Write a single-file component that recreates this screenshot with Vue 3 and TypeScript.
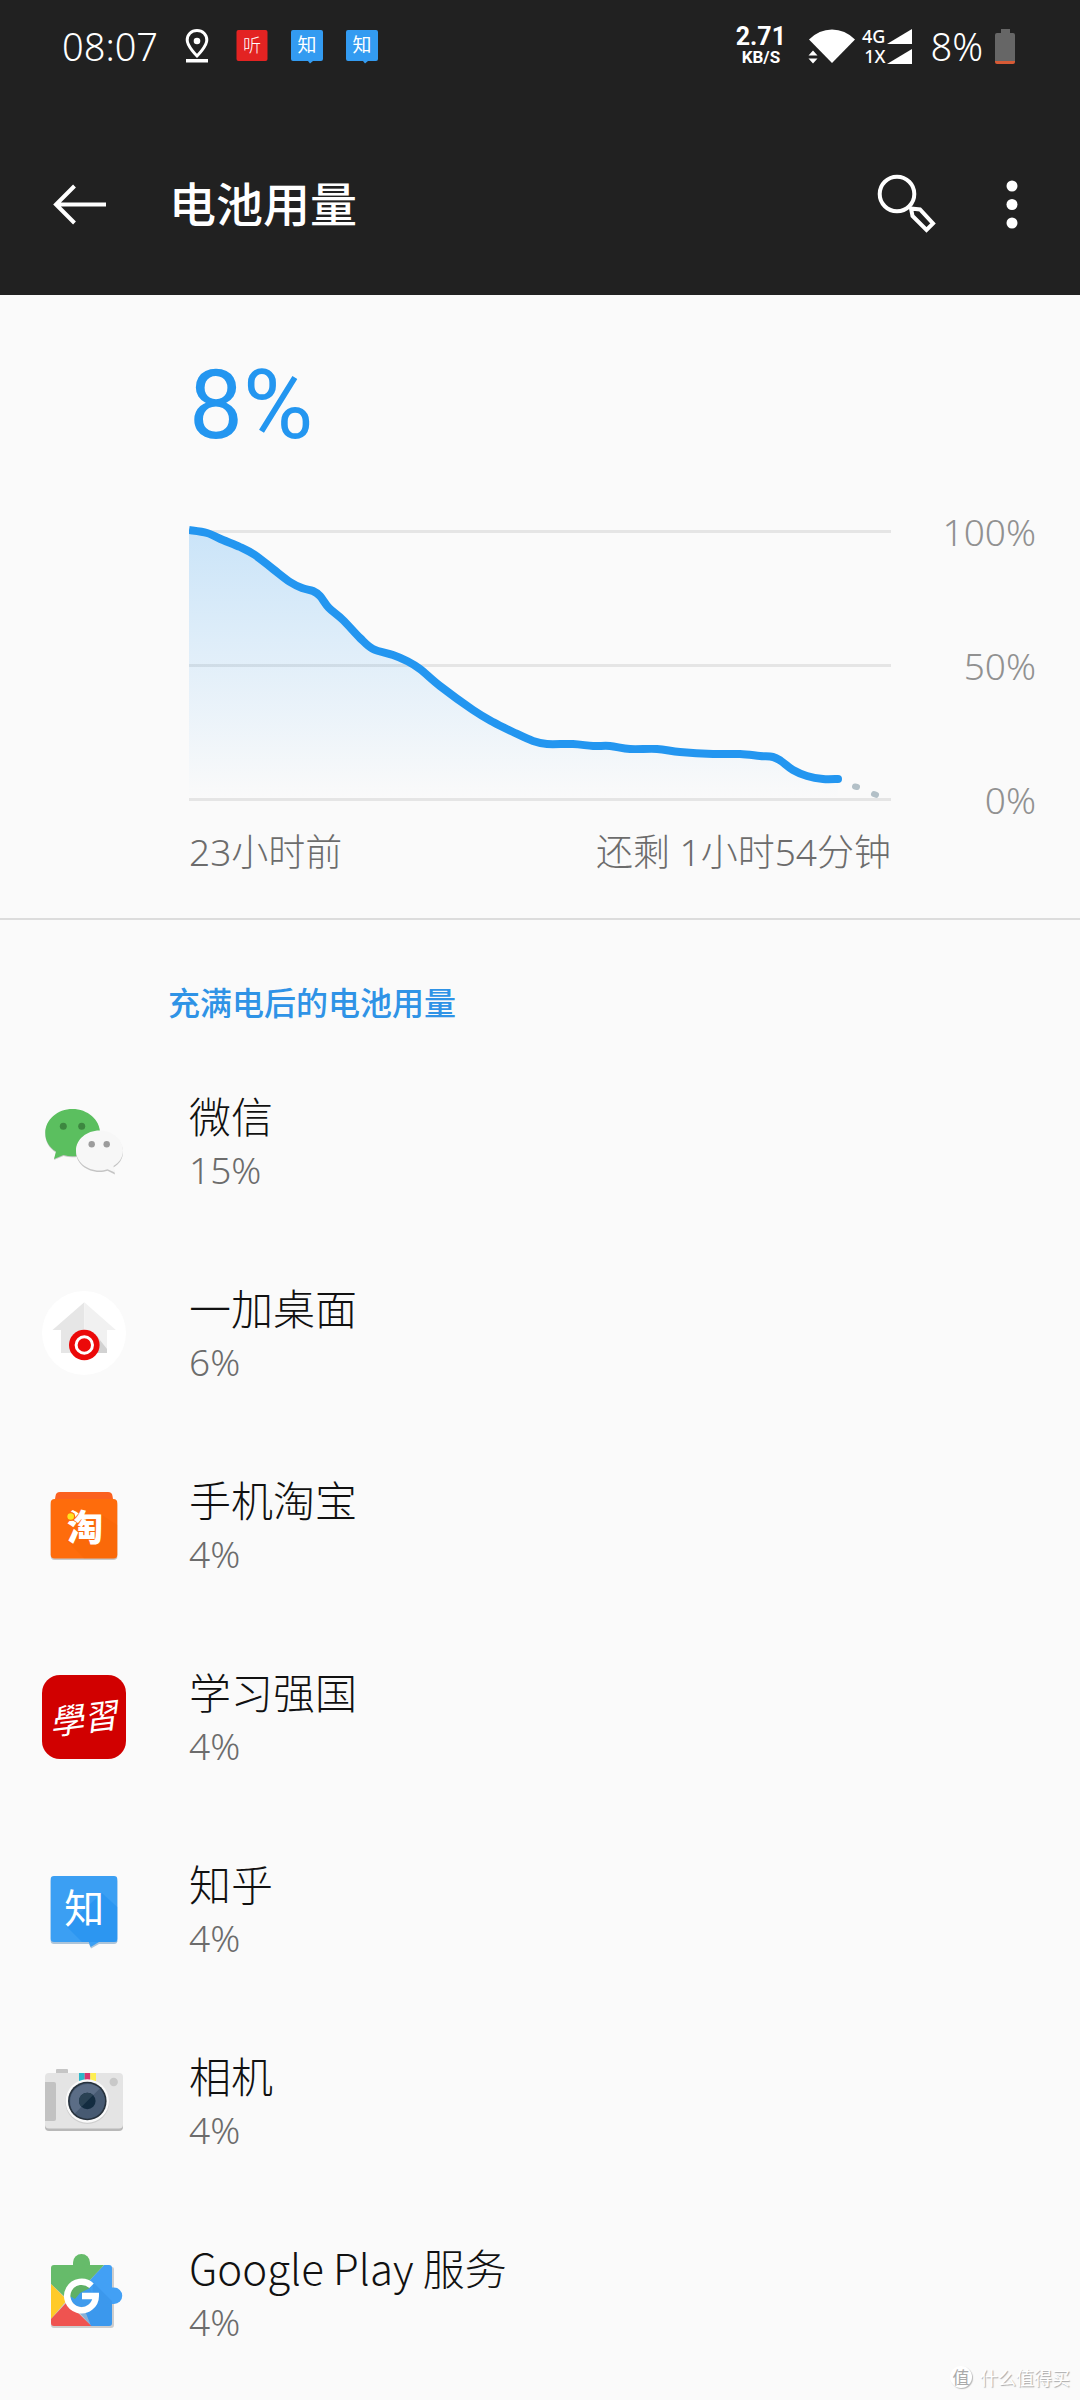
<script setup lang="ts">
interface AppUsage {
  id: string
  name: string
  percent: number
}

const level = 8

const apps: AppUsage[] = [
  { id: 'wechat', name: '微信', percent: 15 },
  { id: 'launcher', name: '一加桌面', percent: 6 },
  { id: 'taobao', name: '手机淘宝', percent: 4 },
  { id: 'xuexi', name: '学习强国', percent: 4 },
  { id: 'zhihu', name: '知乎', percent: 4 },
  { id: 'camera', name: '相机', percent: 4 },
  { id: 'play', name: 'Google Play 服务', percent: 4 },
]

// Battery history samples in plot coordinates (702 x 290, grid lines at 10, 144 and 278).
const history: [number, number][] = [
  [0, 9], [18, 12], [34, 19], [51, 26], [66, 34], [84, 48], [101, 61], [113, 67], [124, 70],
  [131, 75], [140, 87], [154, 99], [171, 117], [184, 128], [204, 134], [218, 140], [231, 148],
  [251, 165], [284, 189], [304, 201], [324, 211], [344, 220], [358, 223], [384, 223], [404, 225],
  [421, 225], [441, 228], [468, 228], [491, 231], [524, 233], [551, 233], [571, 235], [584, 236],
  [592, 240], [604, 249], [618, 255], [634, 258], [649, 258],
]

// Catmull-Rom smoothing through the samples.
function smooth(points: [number, number][]): string {
  let d = `M${points[0][0]} ${points[0][1]}`
  for (let i = 0; i < points.length - 1; i++) {
    const a = points[Math.max(i - 1, 0)]
    const b = points[i]
    const c = points[i + 1]
    const e = points[Math.min(i + 2, points.length - 1)]
    d += `C${b[0] + (c[0] - a[0]) / 6} ${b[1] + (c[1] - a[1]) / 6} ${c[0] - (e[0] - b[0]) / 6} ${c[1] - (e[1] - b[1]) / 6} ${c[0]} ${c[1]}`
  }
  return d
}

const linePath = smooth(history)
const areaPath = `${linePath}V278H0Z`
</script>

<template>
  <div class="screen">
    <header class="top">
      <div class="status">
        <div class="status-side">
          <span class="clock">08:07</span>
          <svg class="badge" viewBox="0 0 32 36">
            <path d="M16 2.500c-5.800 0-9.800 4.300-9.800 9.600C6.200 18.500 16 28 16 28s9.800-9.500 9.800-15.900c0-5.300-4-9.600-9.800-9.600z" fill="none" stroke="#fff" stroke-width="3" />
            <circle cx="16" cy="13" r="3.300" fill="#fff" />
            <rect x="5" y="31" width="22" height="3.500" fill="#fff" />
          </svg>
          <svg class="badge" viewBox="0 0 32 36">
            <rect x="0.500" y="2" width="31" height="31" rx="2" fill="#e32322" />
            <text x="16" y="24" class="glyph thin" font-size="18">听</text>
          </svg>
          <svg v-for="n in 2" :key="n" class="badge" viewBox="0 0 32 36">
            <path d="M2 2h28q2 0 2 2v27q0 2-2 2h-8l-3 2.500-2-2.500H2q-2 0-2-2V4q0-2 2-2z" fill="#339bf1" />
            <text x="16" y="24" class="glyph" font-size="19">知</text>
          </svg>
        </div>
        <div class="status-side">
          <div class="speed"><span class="speed-value">2.71</span><span class="speed-unit">KB/S</span></div>
          <svg class="wifi" viewBox="0 0 48 36">
            <path d="M1 11.500Q11 1.500 24 1.500t23 10L24 35z" fill="#fff" />
            <path d="M0 22.500h9.500v13H0z" fill="#212121" />
            <path d="M0.500 27.500 5 22.500l4.500 5zM0.500 30.500l4.500 5 4.500-5z" fill="#fff" />
          </svg>
          <div class="sims">
            <span class="sim">4G<svg viewBox="0 0 25 15"><path d="M0 15 25 0v15z" fill="#fff" /></svg></span>
            <span class="sim">1X<svg viewBox="0 0 25 15"><path d="M0 15 25 0v15z" fill="#fff" /></svg></span>
          </div>
          <span class="charge">{{ level }}%</span>
          <svg class="battery" viewBox="0 0 20 35">
            <path d="M6 0h9v4h3q2 0 2 2v26H0V6q0-2 2-2h4z" fill="#666" />
            <path d="M0 32h20v1q0 2-2 2H2q-2 0-2-2z" fill="#d75a35" />
          </svg>
        </div>
      </div>
      <div class="appbar">
        <button class="icon-btn" type="button" aria-label="返回">
          <svg viewBox="0 0 60 60"><path d="M24.500 12 6 30.500 24.500 49M6.500 30.500H56" fill="none" stroke="#fff" stroke-width="4" /></svg>
        </button>
        <h1>电池用量</h1>
        <button class="icon-btn" type="button" aria-label="搜索">
          <svg viewBox="0 0 60 60">
            <circle cx="20" cy="20" r="17.300" fill="none" stroke="#fff" stroke-width="4" />
            <path d="M34 34.500 43 35.500 56 49.500 49.500 56 35.500 42z" fill="none" stroke="#fff" stroke-width="4" />
          </svg>
        </button>
        <button class="icon-btn" type="button" aria-label="更多选项">
          <svg viewBox="0 0 60 60" fill="#fff"><circle cx="30" cy="12" r="5.500" /><circle cx="30" cy="30.500" r="5.500" /><circle cx="30" cy="49" r="5.500" /></svg>
        </button>
      </div>
    </header>

    <main>
      <section class="summary">
        <p class="level">{{ level }}%</p>
        <div class="chart">
          <svg class="plot" viewBox="0 0 702 290" preserveAspectRatio="none">
            <defs>
              <linearGradient id="fade" x1="0" y1="0" x2="0" y2="1">
                <stop offset="0" stop-color="#2196f3" stop-opacity="0.220" />
                <stop offset="1" stop-color="#2196f3" stop-opacity="0" />
              </linearGradient>
            </defs>
            <path d="M0 10.500H702M0 144.500H702M0 278.500H702" stroke="#e5e5e5" stroke-width="3" />
            <path :d="areaPath" fill="url(#fade)" />
            <path :d="linePath" fill="none" stroke="#2396f0" stroke-width="8" />
            <circle cx="649" cy="258" r="4" fill="#2396f0" />
            <path d="M666 265.500l2 0.500M685 273l2 0.800" stroke="#b3c0c7" stroke-width="6" stroke-linecap="round" />
          </svg>
          <div class="scale"><span>100%</span><span>50%</span><span>0%</span></div>
          <div class="span"><span>23小时前</span><span>还剩 1小时54分钟</span></div>
        </div>
      </section>

      <section class="usage">
        <h2>充满电后的电池用量</h2>
        <ul>
          <li v-for="app in apps" :key="app.id">
            <button class="row" type="button">
              <svg class="app-icon" viewBox="0 0 84 84">
                <g v-if="app.id === 'wechat'">
                  <path d="M30.500 11C15.500 11 3.300 21.500 3.300 35c0 8 4 14.500 10.700 18.500L12 61l9.500-4c3 .8 6 1.200 9 1.200 15 0 27.500-10.500 27.500-23.500S45.500 11 30.500 11z" fill="#000" opacity="0.200" />
                  <path d="M30.500 10C15.500 10 3.300 20.500 3.300 34c0 8 4 14.500 10.700 18.500L12 60l9.500-4c3 .8 6 1.200 9 1.200 15 0 27.500-10.500 27.500-23.500S45.500 10 30.500 10z" fill="#5bbf5f" />
                  <circle cx="21.300" cy="27.300" r="3.500" fill="#3d8740" /><circle cx="39.700" cy="27.300" r="3.500" fill="#3d8740" />
                  <path d="M57.500 33C44.500 33 34 42 34 53s10.500 20 23.500 20c3 0 5.500-.4 8-1.200l7.500 3.700-1.500-7C77.500 65 81 59.500 81 53c0-11-10.500-20-23.500-20z" fill="#c4c4c4" />
                  <path d="M57.500 31.500C44.500 31.500 34 40.500 34 51.500s10.500 20 23.500 20c3 0 5.500-.4 8-1.200l7.500 3.200-1.500-6.500C77.500 63.500 81 58 81 51.500c0-11-10.500-20-23.500-20z" fill="#f7f7f7" />
                  <circle cx="49.700" cy="45.300" r="3.200" fill="#9c9c9c" /><circle cx="64.700" cy="45.300" r="3.200" fill="#9c9c9c" />
                </g>
                <g v-else-if="app.id === 'launcher'">
                  <circle cx="42" cy="42" r="42" fill="#fff" />
                  <path d="M42.300 11.300V62H19V39h-8.500z" fill="#e6e6e6" />
                  <path d="M42.300 11.300V62H65V39h8.800z" fill="#f1f1f1" />
                  <path d="M54 44 65 58v4H50z" fill="#d2d2d2" />
                  <circle cx="42.300" cy="54" r="15.300" fill="#eb0909" />
                  <circle cx="42.300" cy="54" r="8.200" fill="none" stroke="#fff" stroke-width="3" />
                </g>
                <g v-else-if="app.id === 'taobao'">
                  <path d="M18 9h48q4 0 4.500 4l1 6H12.500l1-6q.5-4 4.500-4z" fill="#fb6120" />
                  <rect x="8.700" y="18" width="66.600" height="59" rx="4" fill="#000" opacity="0.200" />
                  <rect x="8.700" y="16" width="66.600" height="59.500" rx="4" fill="#fe6c0c" />
                  <path d="M24 57 42 75.500h33.300V42L60 32z" fill="#e85d00" opacity="0.180" />
                  <text x="43" y="58" class="glyph heavy" font-size="36">淘</text>
                  <circle cx="28.700" cy="33.500" r="4.500" fill="#fe6c0c" />
                  <circle cx="28.700" cy="33.500" r="3.300" fill="#ffe321" />
                </g>
                <g v-else-if="app.id === 'xuexi'">
                  <rect width="84" height="84" rx="18" fill="#d10000" />
                  <text x="41" y="56" class="glyph script" font-size="34" transform="rotate(-7 42 42)">學習</text>
                </g>
                <g v-else-if="app.id === 'zhihu'">
                  <path d="M12 11h60q3.300 0 3.300 3.300v59.400q0 3.300-3.300 3.300H57l-8 4.500-2-4.500H12q-3.300 0-3.300-3.300V14q0-3 3.300-3z" fill="#1a5f9b" opacity="0.350" />
                  <path d="M12 9h60q3.300 0 3.300 3.300v59.400q0 3.300-3.300 3.300H57l-8.300 5-2-5H12q-3.300 0-3.300-3.300V12.300Q8.700 9 12 9z" fill="#3b9ff3" />
                  <path d="M24 59 40 75h35.300V40L60 26z" fill="#1287ee" opacity="0.350" />
                  <text x="42.300" y="56" class="glyph" font-size="40">知</text>
                </g>
                <g v-else-if="app.id === 'camera'">
                  <rect x="14" y="10" width="12" height="8" rx="1" fill="#c5c5c5" />
                  <rect x="3" y="17" width="78" height="55" rx="4" fill="#b8b8b8" />
                  <rect x="3" y="14" width="78" height="55.500" rx="4" fill="#e4e4e4" />
                  <path d="M3 23h9q2 0 2 2v35q0 2-2 2H3z" fill="#c2c2c2" />
                  <path d="M37 14h5.700v9H37z" fill="#2db7c9" /><path d="M42.700 14h5.600v9h-5.600z" fill="#d7386f" /><path d="M48.300 14H54v9h-5.700z" fill="#fdee52" />
                  <circle cx="45.300" cy="43" r="22" fill="#cfcfcf" />
                  <circle cx="45.300" cy="42" r="21.700" fill="#fafafa" />
                  <circle cx="45.300" cy="42" r="19.300" fill="#27323d" />
                  <circle cx="45.300" cy="42" r="17.700" fill="#475a72" />
                  <path d="M32.800 54.500A17.700 17.700 0 0 1 57.800 29.500z" fill="#5b6d86" />
                  <circle cx="45.300" cy="42" r="8.300" fill="#132c40" />
                  <path d="M39.400 47.900a8.300 8.300 0 0 1 11.800-11.800z" fill="#2a4254" />
                  <circle cx="71.700" cy="23" r="4.200" fill="#c8c8c8" />
                </g>
                <g v-else>
                  <path d="M12 16h58q2 0 2 2v56q0 3-3 3H12q-3 0-3-3V18q0-2 3-2z" fill="#000" opacity="0.180" />
                  <path d="M31 14v-2.500a8.500 8.500 0 0 1 17 0V14z" fill="#66bb6a" />
                  <path d="M70 36.500h2a8.200 8.200 0 0 1 0 16.500h-2z" fill="#42a0f5" />
                  <path d="M36 42 62 14h5q3 0 3 3v55q0 3-3 3H49z" fill="#42a0f5" />
                  <path d="M12 14h50L32 46l-8 1L9 33V17q0-3 3-3z" fill="#66bb6a" />
                  <path d="M9 33 25 49 9 68z" fill="#ffca28" />
                  <path d="M9 68 25 51l6 6 18.500 18H12q-3 0-3-3z" fill="#ef5350" />
                  <path d="M51 31 70 50v22q0 3-3 3H49L36 60l14-8z" fill="#348fe4" opacity="0.450" />
                  <circle cx="39.500" cy="45" r="11" fill="#3f9bed" /><path d="M28 45a11.500 11.500 0 0 1 20-8l-10 5-5 6z" fill="#5fb065" />
                  <path d="M49.500 34.800A14.300 14.300 0 1 0 53.800 45H40" fill="none" stroke="#fff" stroke-width="6.400" />
                </g>
              </svg>
              <span class="texts">
                <span class="name">{{ app.name }}</span>
                <span class="percent">{{ app.percent }}%</span>
              </span>
            </button>
          </li>
        </ul>
      </section>
    </main>

    <div class="watermark"><span class="mark">值</span>什么值得买</div>
  </div>
</template>

<style>
body {
  margin: 0;
  background: #fafafa;
}
</style>

<style scoped>
.screen {
  position: relative;
  min-height: 100vh;
  overflow: hidden;
  background: #fafafa;
  color: #111;
  font-family: "Noto Sans CJK SC", "Noto Sans", sans-serif;
  font-weight: 300;
}
h1, h2, p, ul {
  margin: 0;
  padding: 0;
}
button {
  padding: 0;
  border: 0;
  background: none;
  color: inherit;
  font: inherit;
  text-align: left;
}
svg {
  display: block;
  flex: none;
}
.glyph {
  fill: #fff;
  text-anchor: middle;
  font-weight: 400;
}
.thin {
  font-weight: 300;
}
.heavy {
  font-weight: 900;
}
.script {
  font-style: italic;
  font-weight: 400;
}
.top {
  background: #212121;
  color: #fff;
}
.status {
  display: flex;
  justify-content: space-between;
  align-items: center;
  height: 92px;
  padding: 0 65px 0 62px;
}
.status-side {
  display: flex;
  align-items: center;
}
.clock, .charge, .scale, .span, .percent {
  font-family: "Noto Sans", "Noto Sans CJK SC", sans-serif;
  font-weight: 300;
}
.clock, .charge {
  font-size: 38px;
  line-height: 40px;
}
.badge {
  width: 32px;
  height: 36px;
  margin-left: 23px;
}
.speed {
  display: flex;
  flex-direction: column;
  align-items: center;
  font-family: Roboto, sans-serif;
  font-weight: 700;
}
.speed-value {
  font-size: 25px;
  line-height: 22px;
}
.speed-unit {
  font-size: 17px;
  line-height: 18px;
}
.wifi {
  width: 48px;
  height: 36px;
  margin-left: 22px;
}
.sims {
  display: flex;
  flex-direction: column;
  gap: 2px;
  margin: 0 18px 0 6px;
}
.sim {
  display: flex;
  align-items: center;
  justify-content: flex-end;
  gap: 2px;
  font-family: "Noto Sans", sans-serif;
  font-size: 18px;
  font-weight: 500;
  line-height: 18px;
}
.sim svg {
  width: 25px;
  height: 15px;
}
.battery {
  width: 20px;
  height: 35px;
  margin-left: 12px;
}
.appbar {
  display: flex;
  align-items: center;
  height: 183px;
  padding: 20px 38px 0 50px;
}
.icon-btn svg {
  width: 60px;
  height: 60px;
}
.icon-btn + .icon-btn {
  margin-left: 45px;
}
h1 {
  flex: 1;
  margin-left: 59px;
  padding-bottom: 4px;
  font-size: 47px;
  font-weight: 500;
  line-height: 60px;
}
.summary {
  padding: 54px 44px 43px 189px;
  border-bottom: 2px solid #dcdcdc;
}
.level {
  color: #2396f0;
  font-family: Roboto, sans-serif;
  font-size: 96px;
  font-weight: 400;
  line-height: 112px;
}
.chart {
  display: grid;
  grid-template-columns: 1fr 145px;
  margin-top: 52px;
}
.plot {
  width: 100%;
  height: 290px;
  margin-top: 8px;
}
.scale {
  display: flex;
  flex-direction: column;
  justify-content: space-between;
  height: 306px;
  color: #919191;
  font-size: 37px;
  line-height: 38px;
  text-align: right;
}
.span {
  display: flex;
  justify-content: space-between;
  margin-top: 10px;
  color: #6c6c6c;
  font-size: 37px;
  line-height: 46px;
}
h2 {
  padding: 58px 44px 21px 168px;
  color: #2f93e6;
  font-size: 32px;
  font-weight: 500;
  line-height: 46px;
}
ul {
  list-style: none;
}
.row {
  display: flex;
  align-items: center;
  width: 100%;
  height: 192px;
  padding: 0 42px;
}
.app-icon {
  width: 84px;
  height: 84px;
}
.texts {
  display: flex;
  flex-direction: column;
  margin-left: 63px;
  padding-top: 2px;
}
.name {
  font-size: 42px;
  line-height: 56px;
}
.percent {
  color: #6c6c6c;
  font-size: 37px;
  line-height: 54px;
}
.watermark {
  position: absolute;
  right: 10px;
  bottom: 10px;
  display: flex;
  align-items: center;
  gap: 8px;
  color: #fff;
  font-size: 18px;
  font-weight: 400;
  line-height: 26px;
  text-shadow: 1px 1px 1px #a8a8a8;
}
.mark {
  width: 22px;
  height: 22px;
  border-radius: 50%;
  background: #fff;
  box-shadow: 1px 1px 1px #b8b8b8;
  color: #aaa;
  font-size: 17px;
  line-height: 22px;
  text-align: center;
  text-shadow: none;
}
</style>
